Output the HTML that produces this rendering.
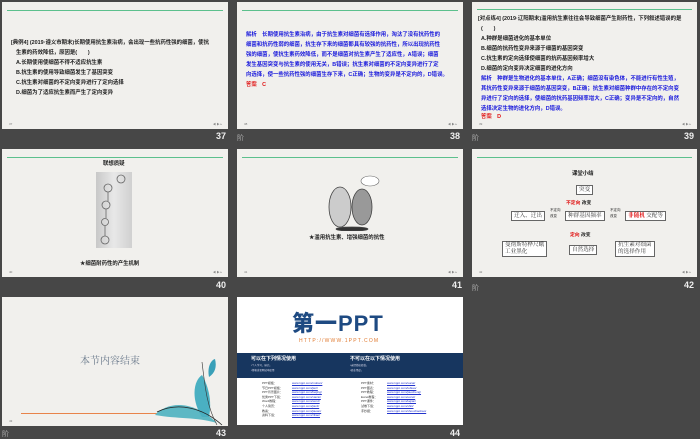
<!DOCTYPE html><html><head><meta charset="utf-8"><style>
*{margin:0;padding:0;box-sizing:border-box}
body{width:700px;height:438px;background:#474747;position:relative;overflow:hidden;font-family:"Liberation Sans","Noto Sans CJK SC",sans-serif}
.s{position:absolute;background:#f1f0ed;overflow:hidden}
.s .ln{position:absolute;left:5px;right:5px;top:8px;height:1px;background:#5cc08d}
.t{position:absolute;font-size:5.4px;line-height:10px;font-weight:bold;color:#222;white-space:nowrap}
.b{color:#1a1adc}.r{color:#e01010}
.n{position:absolute;color:#eee;font-size:9px;font-weight:bold}
.h{position:absolute;color:#aaa;font-size:7px}
.pg{position:absolute;bottom:3px;left:7px;font-size:3px;color:#777}
.nav{position:absolute;bottom:3px;right:6px;font-size:3px;color:#888}
.box{position:absolute;border:1px solid #666;background:#fff;font-size:5.6px;padding:0 2px;line-height:8px;color:#333;white-space:nowrap;font-family:"Liberation Serif","Noto Serif CJK SC",serif}
</style></head><body>
<div class="s" style="left:2px;top:2px;width:226px;height:127px"><div class="ln"></div>
<div class="t" style="left:9px;top:36px">[典例4] (2019·遵义市期末)长期使用抗生素治病，会出现一些抗药性强的细菌，使抗</div>
<div class="t" style="left:14px;top:46px">生素的药效降低，原因是(　　)</div>
<div class="t" style="left:14px;top:56px">A.长期使用使细菌不得不适应抗生素</div>
<div class="t" style="left:14px;top:66px">B.抗生素的使用导致细菌发生了基因突变</div>
<div class="t" style="left:14px;top:76px">C.抗生素对细菌的不定向变异进行了定向选择</div>
<div class="t" style="left:14px;top:86px">D.细菌为了适应抗生素而产生了定向变异</div>
<div class="pg">37</div><div class="nav">◀ ▶ ▸</div></div>
<div class="s" style="left:237px;top:2px;width:226px;height:127px"><div class="ln"></div>
<div class="t b" style="left:9px;top:28px">解析　长期使用抗生素治病，由于抗生素对细菌有选择作用，淘汰了没有抗药性的</div>
<div class="t b" style="left:9px;top:38px">细菌和抗药性弱的细菌，抗生存下来的细菌都具有较强的抗药性，所以出现抗药性</div>
<div class="t b" style="left:9px;top:48px">强的细菌，使抗生素药效降低，而不是细菌对抗生素产生了适应性，A错误；细菌</div>
<div class="t b" style="left:9px;top:58px">发生基因突变与抗生素的使用无关，B错误；抗生素对细菌的不定向变异进行了定</div>
<div class="t b" style="left:9px;top:68px">向选择，使一些抗药性强的细菌生存下来，C正确；生物的变异是不定向的，D错误。</div>
<div class="t r" style="left:9px;top:78px">答案　C</div>
<div class="pg">38</div><div class="nav">◀ ▶ ▸</div></div>
<div class="s" style="left:472px;top:2px;width:225px;height:127px"><div class="ln" style="top:7px"></div>
<div class="t" style="left:6px;top:12px">[对点练4] (2019·辽阳期末)滥用抗生素往往会导致细菌产生耐药性，下列叙述错误的是</div>
<div class="t" style="left:9px;top:22px">(　　)</div>
<div class="t" style="left:9px;top:32px">A.种群是细菌进化的基本单位</div>
<div class="t" style="left:9px;top:42px">B.细菌的抗药性变异来源于细菌的基因突变</div>
<div class="t" style="left:9px;top:52px">C.抗生素的定向选择使细菌的抗药基因频率增大</div>
<div class="t" style="left:9px;top:62px">D.细菌的定向变异决定细菌的进化方向</div>
<div class="t b" style="left:9px;top:72px">解析　种群是生物进化的基本单位，A正确；细菌没有染色体，不能进行有性生殖，</div>
<div class="t b" style="left:9px;top:82px">其抗药性变异来源于细菌的基因突变，B正确；抗生素对细菌种群中存在的不定向变</div>
<div class="t b" style="left:9px;top:92px">异进行了定向的选择，使细菌的抗药基因频率增大，C正确；变异是不定向的，自然</div>
<div class="t b" style="left:9px;top:102px">选择决定生物的进化方向，D错误。</div>
<div class="t r" style="left:9px;top:110px">答案　D</div>
<div class="pg">39</div><div class="nav">◀ ▶ ▸</div></div>
<div class="n" style="left:216px;top:131px">37</div><div class="h" style="left:237px;top:133px">阶</div>
<div class="n" style="left:450px;top:131px">38</div><div class="h" style="left:472px;top:133px">阶</div>
<div class="n" style="left:684px;top:131px">39</div>
<div class="s" style="left:2px;top:149px;width:226px;height:128px"><div class="ln" style="top:8px"></div>
<div class="t" style="left:101px;top:10px">联想质疑</div>
<div style="position:absolute;left:94px;top:23px;width:36px;height:76px;background:linear-gradient(90deg,#c8c8c8,#e8e8e8,#d0d0d0)"></div>
<svg style="position:absolute;left:94px;top:23px" width="36" height="76"><g fill="none" stroke="#666" stroke-width=".8"><circle cx="25" cy="7" r="4"/><circle cx="12" cy="16" r="4"/><circle cx="10" cy="33" r="4"/><circle cx="9" cy="50" r="3.5"/><circle cx="9" cy="68" r="4"/><path d="M12 20V29M10 37V46M9 54V64"/></g></svg>
<div class="t" style="left:78px;top:110px">★细菌耐药性的产生机制</div>
<div class="pg">40</div><div class="nav">◀ ▶ ▸</div></div>
<div class="s" style="left:237px;top:149px;width:226px;height:128px"><div class="ln" style="top:8px"></div>
<svg style="position:absolute;left:85px;top:20px" width="60" height="62"><g stroke="#444" stroke-width=".8" fill="#ccc"><ellipse cx="18" cy="38" rx="11" ry="20"/><ellipse cx="40" cy="38" rx="10" ry="18" fill="#999"/><ellipse cx="30" cy="60" rx="16" ry="2" fill="#333"/></g><ellipse cx="48" cy="12" rx="9" ry="5" fill="#fff" stroke="#666" stroke-width=".6"/></svg>
<div class="t" style="left:72px;top:84px">★滥用抗生素、增强细菌的抗性</div>
<div class="pg">41</div><div class="nav">◀ ▶ ▸</div></div>
<div class="s" style="left:472px;top:149px;width:225px;height:128px"><div class="ln" style="top:8px"></div>
<div class="t" style="left:100px;top:20px">课堂小结</div>
<div class="box" style="left:104px;top:36px">突变</div>
<div class="t" style="left:94px;top:50px;font-size:4.8px"><span class="r">不定向</span> 改变</div>
<div class="box" style="left:39px;top:62px">迁入、迁出</div>
<div class="t" style="left:78px;top:58px;font-size:3.5px;line-height:6px;font-weight:normal">不定向<br>改变</div>
<div class="box" style="left:93px;top:62px">种群基因频率</div>
<div class="t" style="left:138px;top:58px;font-size:3.5px;line-height:6px;font-weight:normal">不定向<br>改变</div>
<div class="box" style="left:153px;top:62px"><span class="r" style="font-weight:bold">非随机</span> 交配等</div>
<div class="t" style="left:98px;top:82px;font-size:4.8px"><span class="r">定向</span> 改变</div>
<div class="box" style="left:30px;top:92px;line-height:7px">曼彻斯特桦尺蛾<br>工业黑化</div>
<div class="box" style="left:97px;top:96px">自然选择</div>
<div class="box" style="left:143px;top:92px;line-height:7px">抗生素对细菌<br>的选择作用</div>
<div class="pg">42</div><div class="nav">◀ ▶ ▸</div></div>
<div class="n" style="left:216px;top:280px">40</div>
<div class="n" style="left:452px;top:280px">41</div><div class="h" style="left:472px;top:283px">阶</div>
<div class="n" style="left:684px;top:280px">42</div>
<div class="s" style="left:2px;top:297px;width:226px;height:129px">
<div style="position:absolute;left:78px;top:55px;font-size:10px;color:#6b7a8c;font-family:'Liberation Serif','Noto Serif CJK SC',serif">本节内容结束</div>
<div style="position:absolute;left:19px;top:116px;width:140px;height:1px;background:#e8834a"></div>
<svg style="position:absolute;left:145px;top:60px" width="80" height="69"><path d="M8 58C20 45 45 42 70 66C50 60 30 62 8 58Z" fill="#5db8c4"/><path d="M55 60C45 45 45 25 55 18C62 30 65 45 62 60Z" fill="#4ab0c2"/><path d="M62 20C60 10 64 3 68 2C70 10 68 16 62 20Z" fill="#3aa0b8"/><path d="M10 55C30 45 55 50 75 68" stroke="#222" fill="none" stroke-width=".8"/><path d="M55 5C58 30 60 50 70 68" stroke="#333" fill="none" stroke-width=".6"/></svg>
<div class="pg">43</div></div>
<div class="s" style="left:237px;top:297px;width:226px;height:128px;background:#fff">
<div style="position:absolute;left:55px;top:15px;font-size:22px;line-height:24px;font-weight:900;color:#1e4a82;letter-spacing:1px">第一PPT</div>
<div style="position:absolute;left:62px;top:41px;font-size:5px;color:#e07a30;letter-spacing:1.2px">HTTP://WWW.1PPT.COM</div>
<div style="position:absolute;left:0;right:0;top:56px;height:25px;background:#17365f"></div>
<div style="position:absolute;left:14px;top:58px;font-size:5px;color:#fff;font-weight:bold">可以在下列情况使用</div>
<div style="position:absolute;left:113px;top:58px;font-size:5px;color:#fff;font-weight:bold">不可以在以下情况使用</div>
<div style="position:absolute;left:14px;top:66px;font-size:2.5px;line-height:5px;color:#dde">•个人学习、研究。<br>•博客或者网站中使用</div>
<div style="position:absolute;left:113px;top:66px;font-size:2.5px;line-height:5px;color:#dde">•未经授权转载。<br>•商业用途。</div>
<div style="position:absolute;left:25px;top:84px;font-size:3px;line-height:4.6px;color:#333">PPT模板：<br>节日PPT模板：<br>PPT背景图片：<br>优秀PPT下载：<br>Word教程：<br>个人简历：<br>教案：<br>资料下载：</div>
<div style="position:absolute;left:55px;top:84px;font-size:3px;line-height:4.6px;color:#2233cc;text-decoration:underline">www.1ppt.com/moban/<br>www.1ppt.com/jieri/<br>www.1ppt.com/beijing/<br>www.1ppt.com/xiazai/<br>www.1ppt.com/word/<br>www.1ppt.com/jianli/<br>www.1ppt.com/jiaoan/<br>www.1ppt.com/ziliao/</div>
<div style="position:absolute;left:124px;top:84px;font-size:3px;line-height:4.6px;color:#333">PPT素材：<br>PPT图表：<br>PPT教程：<br>Excel教程：<br>PPT课件：<br>试卷下载：<br>手抄报：</div>
<div style="position:absolute;left:150px;top:84px;font-size:3px;line-height:4.6px;color:#2233cc;text-decoration:underline">www.1ppt.com/sucai/<br>www.1ppt.com/tubiao/<br>www.1ppt.com/jiaocheng/<br>www.1ppt.com/excel/<br>www.1ppt.com/kejian/<br>www.1ppt.com/shiti/<br>www.1ppt.com/shouchaobao/</div>
</div>
<div class="h" style="left:2px;top:429px">阶</div>
<div class="n" style="left:216px;top:428px">43</div>
<div class="n" style="left:450px;top:428px">44</div>
</body></html>
